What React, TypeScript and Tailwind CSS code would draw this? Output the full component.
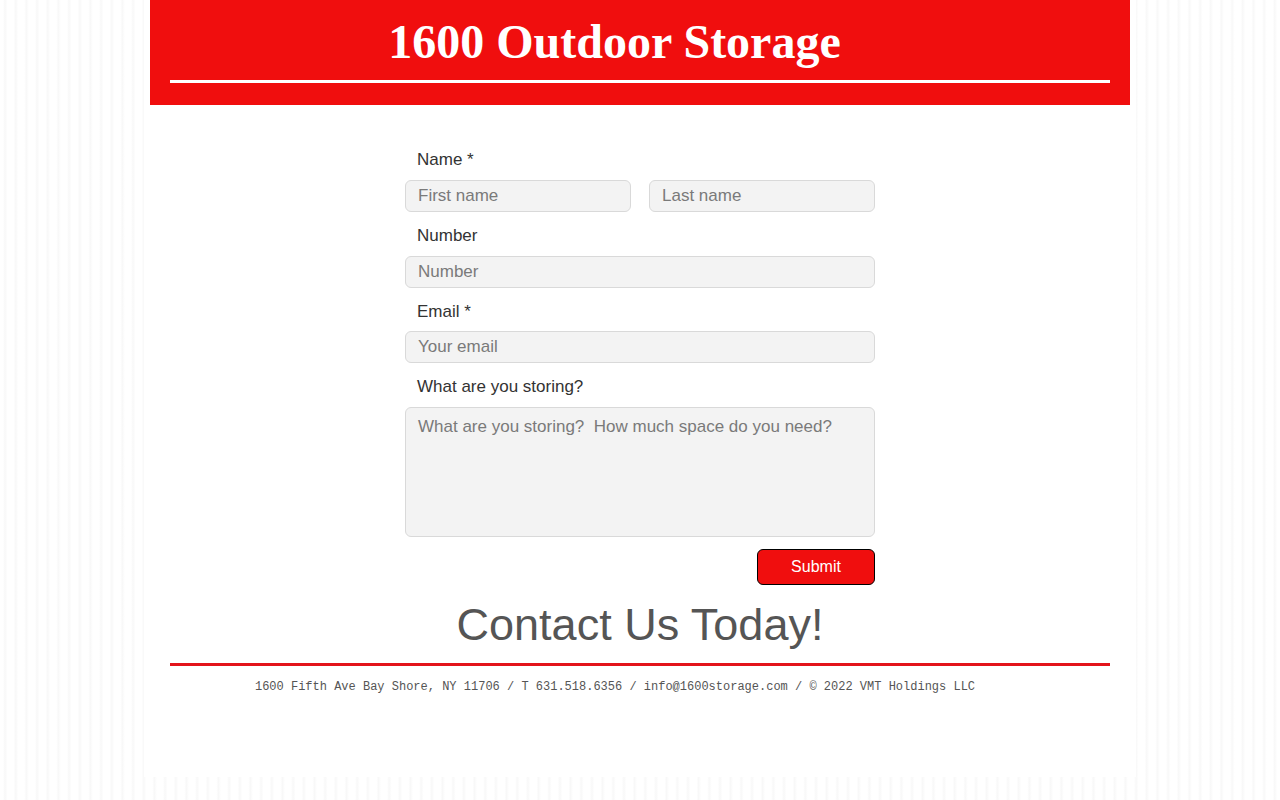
import React from "react";

export default function App() {
  const inputCls =
    "block h-8 w-full rounded-[6px] border border-[#d9d9d9] bg-[#f3f3f3] px-[12px] text-[17px] text-[#333] placeholder:text-[#7a7a7a] outline-none";
  const labelCls = "block h-6 pl-[12px] text-[17px] leading-[26px] text-[#333]";
  return (
    <div
      className="min-h-screen w-full bg-[repeating-linear-gradient(90deg,#ffffff_0px,#ffffff_3px,#f8f8f8_5px,#ffffff_7.5px,#ffffff_10.67px)]"
      style={{ fontFamily: '"Liberation Sans", Arial, sans-serif' }}
    >
      <div className="mx-auto h-[777px] w-[992px] bg-white px-[6px]">
        <header className="h-[105px] bg-[#f00e0e] px-[20px] pt-[18px]">
          <div className="flex justify-center pr-[51px]">
            <h1
              className="text-[48px] font-bold leading-none text-white"
              style={{ fontFamily: '"Liberation Serif", "Times New Roman", serif' }}
            >
              1600 Outdoor Storage
            </h1>
          </div>
          <div className="mt-[14px] h-[3px] bg-white" />
        </header>

        <form className="mx-auto mt-[42px] w-[470px]" onSubmit={(e) => e.preventDefault()}>
          <label className={labelCls}>Name *</label>
          <div className="mt-[9px] flex gap-[18px]">
            <input className={inputCls} placeholder="First name" />
            <input className={inputCls} placeholder="Last name" />
          </div>
          <label className={`${labelCls} mt-[11px]`}>Number</label>
          <div className="mt-[9px]">
            <input className={inputCls} placeholder="Number" />
          </div>
          <label className={`${labelCls} mt-[11px]`}>Email *</label>
          <div className="mt-[8px]">
            <input className={inputCls} placeholder="Your email" />
          </div>
          <label className={`${labelCls} mt-[11px]`}>What are you storing?</label>
          <textarea
            className="mt-[9px] block h-[130px] w-full resize-none rounded-[6px] border border-[#d9d9d9] bg-[#f3f3f3] px-[12px] pt-[7px] text-[17px] leading-6 text-[#333] placeholder:text-[#7a7a7a] outline-none"
            placeholder="What are you storing?  How much space do you need?"
          />
          <div className="mt-[12px] flex justify-end">
            <button
              type="submit"
              className="h-9 w-[118px] rounded-[6px] border border-black bg-[#f00e0e] text-[16px] text-white"
            >
              Submit
            </button>
          </div>
        </form>

        <h2 className="mt-[17px] text-center text-[45px] leading-none text-[#555]">
          Contact Us Today!
        </h2>
        <div className="mx-[20px] mt-[16px] h-[3px] bg-[#e3141b]" />
        <p
          className="mt-[13px] pr-[50px] text-center text-[12px] leading-4 text-[#555]"
          style={{ fontFamily: '"Liberation Mono", "Courier New", monospace' }}
        >
          1600 Fifth Ave Bay Shore, NY 11706 / T 631.518.6356 / info@1600storage.com / © 2022 VMT Holdings LLC
        </p>
      </div>
    </div>
  );
}
